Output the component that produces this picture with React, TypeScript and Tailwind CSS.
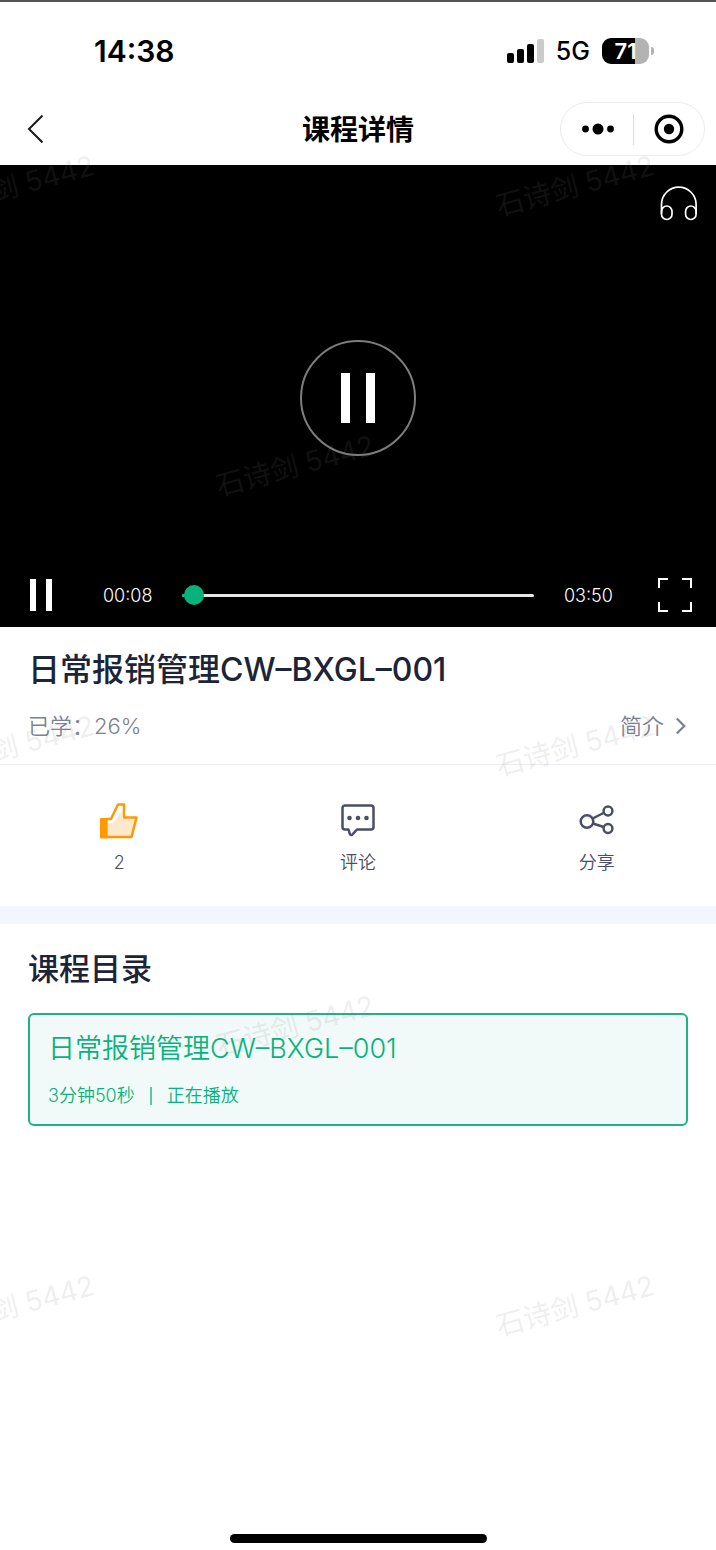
import { useState } from 'react';
import { clsx } from 'clsx';

const DURATION = 230;

const watermarks = [
  'left-[-66px] top-[166px]',
  'left-[494px] top-[166px]',
  'left-[214px] top-[446px]',
  'left-[-66px] top-[726px]',
  'left-[494px] top-[726px]',
  'left-[214px] top-[1006px]',
  'left-[-66px] top-[1286px]',
  'left-[494px] top-[1286px]',
];

const formatTime = (s: number) =>
  `${String(Math.floor(s / 60)).padStart(2, '0')}:${String(s % 60).padStart(2, '0')}`;

function StatusBar() {
  return (
    <div className="flex h-[93px] items-center justify-between border-t-2 border-[#555353] pt-1.5 pr-[62px] pl-[94px]">
      <span className="text-[30px] leading-10 font-semibold">14:38</span>
      <div className="flex items-center">
        <svg className="h-6 w-[37px]" viewBox="0 0 37 24">
          <rect x="0" y="14" width="7" height="10" rx="2" />
          <rect x="10" y="10" width="7" height="14" rx="2" />
          <rect x="20" y="5" width="7" height="19" rx="2" />
          <rect x="30" y="0" width="7" height="24" rx="2" fill="#cbcbcb" />
        </svg>
        <span className="ml-3 text-[25px] leading-8 font-medium">5G</span>
        <div className="ml-3 flex items-center gap-0.5">
          <div className="flex h-[26px] w-[47px] items-center justify-center rounded-[9px] bg-linear-to-r from-black from-70% to-[#b3b3b3] to-70% text-[22px] leading-6 font-semibold text-white">
            71
          </div>
          <div className="h-2 w-[3px] rounded-r-full bg-[#b3b3b3]" />
        </div>
      </div>
    </div>
  );
}

function NavBar() {
  return (
    <header className="grid h-[72px] grid-cols-[1fr_auto_1fr] items-center px-[11px]">
      <button type="button" aria-label="返回" className="ml-4 justify-self-start">
        <svg className="h-[30px] w-4" viewBox="0 0 16 30" fill="none" stroke="#1a1a1a" strokeWidth="2">
          <path d="M15.500 1.500 2 15l13.500 13.500" />
        </svg>
      </button>
      <h1 className="pt-0.5 text-[28px] leading-10 font-semibold">课程详情</h1>
      <div className="flex h-[54px] w-[145px] items-center justify-self-end rounded-full border border-[#ececec]">
        <button type="button" aria-label="更多" className="flex flex-1 items-center justify-center pl-0.5">
          <svg className="h-3 w-8" viewBox="0 0 32 12">
            <circle cx="3.500" cy="6" r="3.400" />
            <circle cx="16" cy="6" r="5.500" />
            <circle cx="28.500" cy="6" r="3.400" />
          </svg>
        </button>
        <div className="h-[31px] w-px bg-[#dcdcdc]" />
        <button type="button" aria-label="关闭" className="flex flex-1 items-center justify-center">
          <svg className="h-[30px] w-[30px]" viewBox="0 0 30 30">
            <circle cx="15" cy="15" r="12.800" fill="none" stroke="#000" strokeWidth="3.400" />
            <circle cx="15" cy="15" r="5.200" />
          </svg>
        </button>
      </div>
    </header>
  );
}

function Player() {
  const [time, setTime] = useState(8);

  return (
    <section className="relative flex h-[462px] flex-col justify-end bg-black text-white">
      <button type="button" aria-label="音频模式" className="absolute top-[21px] right-[18px]">
        <svg className="h-[35px] w-[38px]" viewBox="0 0 38 35" fill="none" stroke="#fff" strokeWidth="1.700">
          <path d="M1.500 27.500V18.500a17.300 17.300 0 0 1 34.600 0v9" />
          <rect x="1.500" y="20" width="10.500" height="13.500" rx="5.250" />
          <rect x="25.600" y="20" width="10.500" height="13.500" rx="5.250" />
        </svg>
      </button>
      <button
        type="button"
        aria-label="暂停"
        className="absolute inset-x-0 top-[175px] mx-auto flex h-[116px] w-[116px] items-center justify-center gap-4 rounded-full border-2 border-[#7d7d7d]"
      >
        <span className="h-[50px] w-[9px] bg-white" />
        <span className="h-[50px] w-[9px] bg-white" />
      </button>
      <div className="flex h-16 items-center pr-6 pl-[30px] text-[18px] leading-6 font-[350]">
        <button type="button" aria-label="暂停播放" className="flex gap-[10px]">
          <span className="h-8 w-[6px] bg-white" />
          <span className="h-8 w-[6px] bg-white" />
        </button>
        <span className="ml-[51px] w-[50px] pt-0.5">{formatTime(time)}</span>
        <div className="relative mr-[30px] ml-[29px] flex h-5 flex-1 items-center">
          <div className="h-[3px] w-full overflow-hidden rounded-full bg-[#e8e6e8]">
            <div className="h-full bg-[#09b27c]" style={{ width: `${(time / DURATION) * 100}%` }} />
          </div>
          <input
            type="range"
            aria-label="播放进度"
            min={0}
            max={DURATION}
            value={time}
            onChange={(e) => setTime(Number(e.target.value))}
            className="absolute inset-y-0 -left-[10px] h-5 w-[calc(100%+20px)] appearance-none bg-transparent [&::-webkit-slider-thumb]:h-5 [&::-webkit-slider-thumb]:w-5 [&::-webkit-slider-thumb]:appearance-none [&::-webkit-slider-thumb]:rounded-full [&::-webkit-slider-thumb]:bg-[#09b27c]"
          />
        </div>
        <span className="w-[50px] pt-0.5">03:50</span>
        <button type="button" aria-label="全屏" className="ml-11">
          <svg className="h-[34px] w-[34px]" viewBox="0 0 34 34" fill="none" stroke="#fff" strokeWidth="2">
            <path d="M1 10V1h9M24 1h9v9M33 24v9h-9M10 33H1v-9" />
          </svg>
        </button>
      </div>
    </section>
  );
}

function LikeIcon() {
  return (
    <svg className="h-9 w-[38px]" viewBox="0 0 38 36">
      <path d="M6 17h5L18 1.500h6V14h12.500l-5 20H6z" fill="#fff" />
      <path d="M7 20h6l9-12v8h13l-4.500 18H7z" fill="#ffe8cc" />
      <path d="M6 16h5L18 1.500h6V14.500h12.500L31.500 34H6z" fill="none" stroke="#ff9900" strokeWidth="2.500" strokeLinejoin="round" />
      <rect x="0" y="15" width="7.500" height="20.500" rx="1" fill="#ff9900" />
    </svg>
  );
}

function CommentIcon() {
  return (
    <svg className="h-9 w-[34px]" viewBox="0 0 34 36">
      <path
        d="M4 2.500h26a2.500 2.500 0 0 1 2.500 2.500v19a2.500 2.500 0 0 1-2.500 2.500H16l-4.500 4.800c-1 1-2.300.8-2.700-.5L7.500 26.500H4A2.500 2.500 0 0 1 1.500 24V5A2.500 2.500 0 0 1 4 2.500z"
        fill="none"
        stroke="#4a4f63"
        strokeWidth="2.500"
        strokeLinejoin="round"
      />
      <g fill="#4a4f63">
        <circle cx="8.500" cy="15" r="2.300" />
        <circle cx="17" cy="15" r="2.300" />
        <circle cx="25.500" cy="15" r="2.300" />
      </g>
    </svg>
  );
}

function ShareIcon() {
  return (
    <svg className="h-9 w-[35px]" viewBox="0 0 35 36" fill="none" stroke="#4a4f63" strokeWidth="2.500">
      <circle cx="8" cy="18.500" r="6.300" />
      <circle cx="29" cy="8" r="4.400" />
      <circle cx="29" cy="25.500" r="4.400" />
      <path d="m13.500 15.500 11-5.500M14 20.500l10.700 3.500" />
    </svg>
  );
}

const actions = [
  { label: '2', icon: <LikeIcon /> },
  { label: '评论', icon: <CommentIcon /> },
  { label: '分享', icon: <ShareIcon /> },
];

export default function App() {
  return (
    <div className="relative flex min-h-screen flex-col overflow-hidden bg-white font-['Inter','Noto_Sans_CJK_SC',sans-serif] text-black">
      <StatusBar />
      <NavBar />
      <Player />

      <section className="border-b border-[#ebecf0] px-7 pt-[22px] pb-[22px]">
        <h2 className="text-[32px] leading-[42px] font-medium text-[#1c2438]">日常报销管理CW–BXGL–001</h2>
        <div className="mt-[19px] flex items-center justify-between text-[22px] leading-8 font-[350] text-[#7c8191]">
          <span>已学：26%</span>
          <a href="#intro" className="flex items-center gap-3">
            简介
            <svg className="h-[18px] w-3" viewBox="0 0 12 18" fill="none" stroke="currentColor" strokeWidth="2.200">
              <path d="m.8 1.500 7.500 7.500-7.500 7.500" />
            </svg>
          </a>
        </div>
      </section>

      <section className="grid grid-cols-3 pt-[38px] pb-[31px]">
        {actions.map(({ label, icon }) => (
          <button key={label} type="button" className="flex flex-col items-center gap-3 text-[18px] leading-6 font-[350] text-[#4a4f63]">
            {icon}
            {label}
          </button>
        ))}
      </section>

      <div className="h-[18px] bg-[#f3f7fb]" />

      <section className="flex-1 px-7 pt-6">
        <h2 className="text-[31px] leading-[42px] font-medium text-[#1c2438]">课程目录</h2>
        <button
          type="button"
          className="mt-[23px] block w-full rounded-md border-2 border-[#1fb283] bg-[#f1faf8] px-[18px] py-4 text-left text-[#09b27c]"
        >
          <span className="block text-[27px] leading-9 font-[350]">日常报销管理CW–BXGL–001</span>
          <span className="mt-[17px] flex items-center text-[18px] leading-6 font-[350]">
            3分钟50秒
            <span className="mx-[15px] h-[18px] w-[2px] bg-[#5fc7a5]" />
            正在播放
          </span>
        </button>
      </section>

      <div className="mx-auto mb-[7px] h-[9px] w-[257px] rounded-full bg-black" />

      <div aria-hidden="true" className="pointer-events-none absolute inset-0 overflow-hidden">
        {watermarks.map((pos) => (
          <span
            key={pos}
            className={clsx('absolute w-[160px] -rotate-15 text-center text-[28px] leading-10 whitespace-nowrap text-[#808080]/14', pos)}
          >
            石诗剑 5442
          </span>
        ))}
      </div>
    </div>
  );
}
